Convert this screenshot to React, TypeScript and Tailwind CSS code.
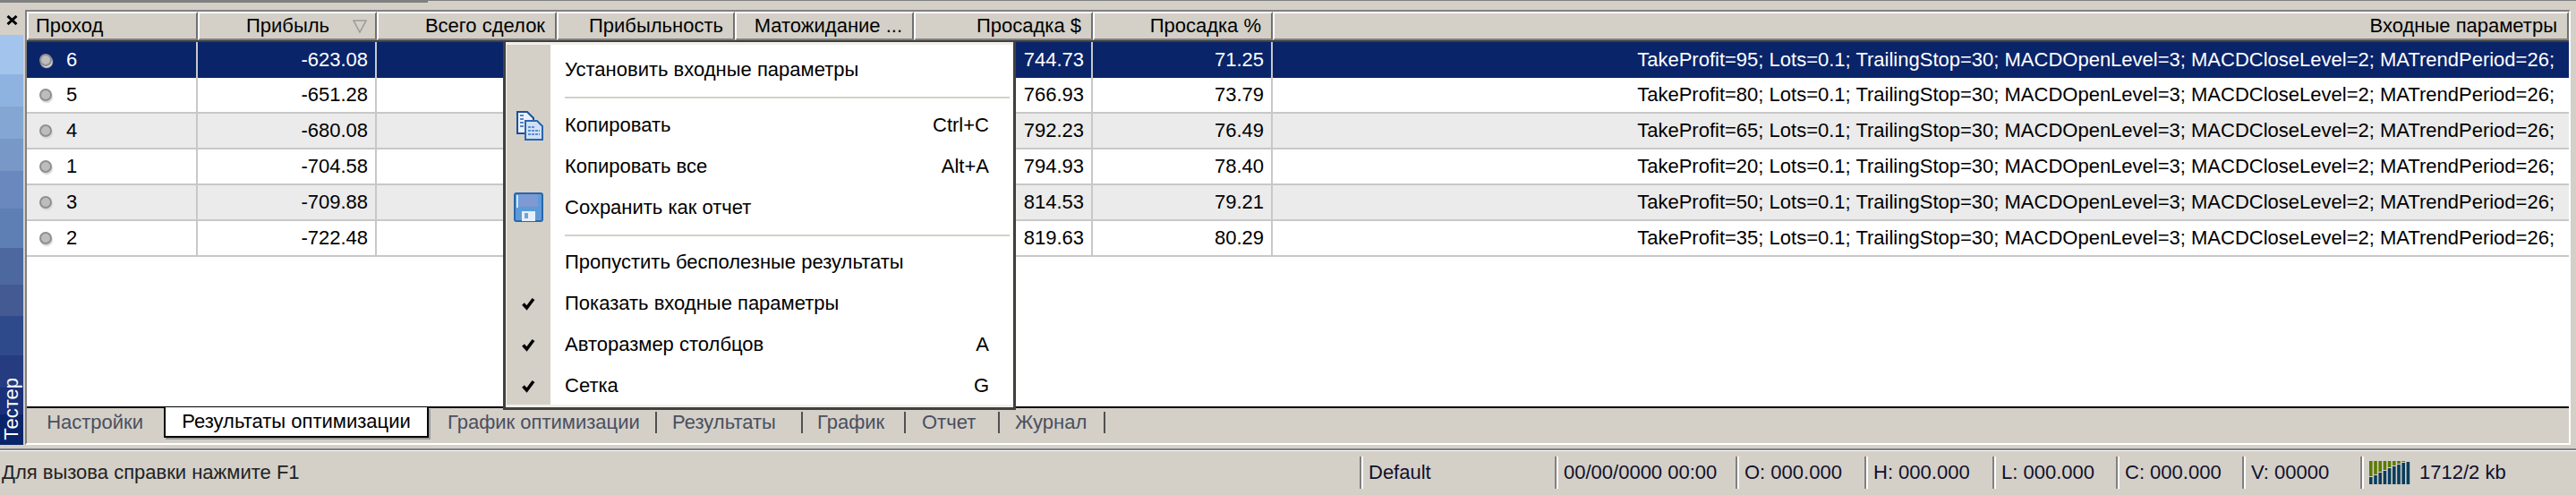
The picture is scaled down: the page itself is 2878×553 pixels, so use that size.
import { FC } from "react";

const RESULTS = [
  { pass: "6", profit: "-623.08", dd: "744.73", ddp: "71.25", tp: 95 },
  { pass: "5", profit: "-651.28", dd: "766.93", ddp: "73.79", tp: 80 },
  { pass: "4", profit: "-680.08", dd: "792.23", ddp: "76.49", tp: 65 },
  { pass: "1", profit: "-704.58", dd: "794.93", ddp: "78.40", tp: 20 },
  { pass: "3", profit: "-709.88", dd: "814.53", ddp: "79.21", tp: 50 },
  { pass: "2", profit: "-722.48", dd: "819.63", ddp: "80.29", tp: 35 },
];

const GRID =
  "grid grid-cols-[191px_200px_201px_199px_200px_200px_201px_1fr]";

const SIDE_STEPS = [
  "h-[44px] bg-[#a3c4ec]",
  "h-[36px] bg-[#8fb3e0]",
  "h-[36px] bg-[#84a6d2]",
  "h-[36px] bg-[#7899c7]",
  "h-[42px] bg-[#6a88bd]",
  "h-[44px] bg-[#5e7fb4]",
  "h-[41px] bg-[#4d689f]",
  "h-[35px] bg-[#435b92]",
  "h-[44px] bg-[#2f4a8a]",
  "h-[36px] bg-[#253c80]",
  "h-[30px] bg-[#1a3078]",
  "flex-1 bg-[#0a246a]",
];

const HeaderCell: FC<{ label?: string; left?: boolean; sort?: boolean }> = ({
  label,
  left,
  sort,
}) => (
  <div
    className={`flex h-full items-center border-t-2 border-r-2 border-b-2 border-l-2 border-t-white border-r-[#707070] border-b-[#808080] border-l-white ${
      left ? "justify-start pl-2" : sort ? "justify-end pr-[9px]" : "justify-end pr-[11px]"
    }`}
  >
    <span className="whitespace-nowrap">{label}</span>
    {sort && (
      <svg width="16" height="15" viewBox="0 0 16 15" className="ml-[26px]">
        <path d="M1 1h14L8 14z" fill="none" stroke="#9a9a9a" strokeWidth="1.5" />
      </svg>
    )}
  </div>
);

const MenuItem: FC<{ label: string; hint?: string; checked?: boolean }> = ({
  label,
  hint,
  checked,
}) => (
  <div className="flex h-[46px] items-center">
    <div className="flex h-full w-[49px] items-center justify-center">
      {checked && (
        <svg width="15" height="15" viewBox="0 0 15 15">
          <path d="M1.5 7.5l4 4.5L13 2" fill="none" stroke="#000" strokeWidth="3.6" />
        </svg>
      )}
    </div>
    <span className="ml-4 whitespace-nowrap">{label}</span>
    {hint && <span className="mr-[26px] ml-auto">{hint}</span>}
  </div>
);

const MenuSeparator: FC<{ className: string }> = ({ className }) => (
  <div className={`${className} flex items-center pr-[3px] pl-[65px]`}>
    <div className="h-[2px] w-full bg-[#d4d0c8]" />
  </div>
);

const CopyIcon = () => (
  <svg width="34" height="34" viewBox="0 0 34 34">
    <path d="M3 2h11l7 7v17H3z" fill="#e9f0fb" stroke="#1f4f96" strokeWidth="2" />
    <path d="M6 6h4M6 10h4M6 14h4M6 18h4" stroke="#5b83c4" strokeWidth="2" />
    <path d="M12 12h13l6 6v15H12z" fill="#cfe0f6" stroke="#2a66ac" strokeWidth="2" />
    <path d="M15 19h8M15 23h13M15 27h13" stroke="#5b8fcf" strokeWidth="2" strokeDasharray="3 1" />
  </svg>
);

const SaveIcon = () => (
  <svg width="34" height="34" viewBox="0 0 34 34">
    <rect x="1" y="1" width="31" height="31" rx="2" fill="#5d9bd8" stroke="#2a66ac" strokeWidth="2" />
    <rect x="6" y="2" width="21" height="14" fill="#7e9ad2" />
    <path d="M4 3v14" stroke="#d5e6f8" strokeWidth="2" />
    <rect x="9" y="21" width="15" height="11" fill="#e6f0fb" />
    <rect x="12" y="23" width="4" height="6" fill="#6fa3dc" />
  </svg>
);

const MemoryBars = () => {
  const bars = [8, 10, 13, 15, 18, 20, 22, 24, 25];
  return (
    <svg width="47" height="26" viewBox="0 0 47 26">
      {bars.map((teal, i) => (
        <g key={i}>
          <rect x={i * 5.2} y={0} width="3.6" height={26 - teal - 1} fill="#5c7a00" />
          <rect x={i * 5.2} y={26 - teal} width="3.6" height={teal} fill="#0a3d5c" />
        </g>
      ))}
    </svg>
  );
};

const StatusCell: FC<{ className: string; label?: string; children?: React.ReactNode }> = ({
  className,
  label,
  children,
}) => (
  <div
    className={`${className} flex h-[36px] items-center border-l-2 border-l-[#808080] pl-[8px] shadow-[inset_2px_0_0_#fff]`}
  >
    {children}
    {label && <span className="whitespace-nowrap">{label}</span>}
  </div>
);

const TAB_SEPARATOR = "h-6 w-[2px] bg-[#505050]";

export default function App() {
  return (
    <div className="relative flex h-[553px] w-[2878px] flex-col overflow-hidden bg-[#d4d0c8] font-['Liberation_Sans',sans-serif] text-[22px] leading-none text-black">
      {/* top edge of the panel above */}
      <div className="flex h-[4px] shrink-0">
        <div className="h-[3px] w-[478px] bg-[#808080]" />
        <div className="h-[1px] flex-1 bg-[#808080]" />
      </div>

      <div className="flex h-[493px] shrink-0">
        {/* side caption */}
        <div className="flex w-[26px] shrink-0 flex-col">
          <div className="flex h-[35px] shrink-0 items-start justify-center pt-[13px]">
            <svg width="13" height="11" viewBox="0 0 13 11">
              <path d="M1.5 1l10 9M11.5 1l-10 9" stroke="#000" strokeWidth="3" />
            </svg>
          </div>
          <div className="relative flex flex-1 flex-col">
            {SIDE_STEPS.map((step) => (
              <div key={step} className={step} />
            ))}
            <span className="absolute bottom-[5px] left-[2px] rotate-180 text-[22px] text-white [writing-mode:vertical-rl]">
              Тестер
            </span>
          </div>
        </div>

        {/* results list */}
        <div className="mt-[7px] ml-[2px] flex w-[2844px] shrink-0 flex-col border-t-2 border-r-2 border-b-2 border-l-2 border-t-[#808080] border-r-white border-b-white border-l-[#808080]">
          <div className="flex h-[443px] flex-col border-b-2 border-b-black bg-white">
            <div className={`${GRID} h-[34px] shrink-0 border-b-2 border-b-[#404040] bg-[#d4d0c8]`}>
              <HeaderCell label="Проход" left />
              <HeaderCell label="Прибыль" sort />
              <HeaderCell label="Всего сделок" />
              <HeaderCell label="Прибыльность" />
              <HeaderCell label="Матожидание ..." />
              <HeaderCell label="Просадка $" />
              <HeaderCell label="Просадка %" />
              <HeaderCell label="Входные параметры" />
            </div>
            {RESULTS.map((r, i) => {
              const selected = i === 0;
              const striped = i % 2 === 0;
              const row = selected
                ? "bg-[#0a246a] text-white"
                : striped
                  ? "bg-[#ebebeb] border-b-2 border-b-[#c8c8c8]"
                  : "bg-white border-b-2 border-b-[#c8c8c8]";
              const cell = "flex items-center justify-end border-r-2 border-r-[#c8c8c8] pr-2";
              return (
                <div key={r.pass} className={`${GRID} h-10 shrink-0 ${row}`}>
                  <div className="flex items-center border-r-2 border-r-[#c8c8c8] pl-[14px]">
                    <span className="size-[14px] rounded-full border-2 border-[#8f8f8f] bg-[#bdbdbd] shadow-[1px_2px_1px_#d8d8d8]" />
                    <span className="ml-[16px]">{r.pass}</span>
                  </div>
                  <div className={cell}>{r.profit}</div>
                  <div className={cell} />
                  <div className={cell} />
                  <div className={cell} />
                  <div className={cell}>{r.dd}</div>
                  <div className={cell}>{r.ddp}</div>
                  <div className="flex items-center justify-end whitespace-nowrap pr-4">
                    TakeProfit={r.tp}; Lots=0.1; TrailingStop=30; MACDOpenLevel=3; MACDCloseLevel=2; MATrendPeriod=26;
                  </div>
                </div>
              );
            })}
          </div>

          {/* tabs */}
          <div className="flex h-[39px] shrink-0 items-start text-[#4a4f60]">
            <div className="flex h-[32px] w-[153px] items-center justify-end pr-[23px]">Настройки</div>
            <div className="-mt-[1px] flex h-[34px] w-[296px] items-center justify-center border-r-2 border-b-2 border-l-2 border-black bg-white text-black shadow-[2px_2px_0_#9a9a9a]">
              Результаты оптимизации
            </div>
            <div className="flex h-[32px] items-center">
              <span className="ml-[21px] w-[232px] whitespace-nowrap">График оптимизации</span>
              <span className={TAB_SEPARATOR} />
              <span className="ml-[17px] w-[144px]">Результаты</span>
              <span className={TAB_SEPARATOR} />
              <span className="ml-[16px] w-[97px]">График</span>
              <span className={TAB_SEPARATOR} />
              <span className="ml-[18px] w-[85px]">Отчет</span>
              <span className={TAB_SEPARATOR} />
              <span className="ml-[17px] w-[99px]">Журнал</span>
              <span className={TAB_SEPARATOR} />
            </div>
          </div>
        </div>
      </div>

      {/* status bar */}
      <div className="mt-[4px] flex h-[52px] shrink-0 flex-col">
        <div className="h-[2px] bg-[#808080]" />
        <div className="h-[1px] bg-white" />
        <div className="flex h-[47px] items-center text-[#10102c]">
          <div className="w-[1519px] pl-[2px] text-[#222]">Для вызова справки нажмите F1</div>
          <StatusCell className="w-[218px]" label="Default" />
          <StatusCell className="w-[202px]" label="00/00/0000 00:00" />
          <StatusCell className="w-[144px]" label="O: 000.000" />
          <StatusCell className="w-[143px]" label="H: 000.000" />
          <StatusCell className="w-[138px]" label="L: 000.000" />
          <StatusCell className="w-[141px]" label="C: 000.000" />
          <StatusCell className="w-[132px]" label="V: 00000" />
          <StatusCell className="w-[241px]" label="1712/2 kb">
            <span className="mr-[9px] flex">
              <MemoryBars />
            </span>
          </StatusCell>
        </div>
      </div>
      <div className="h-[2px] bg-[#f4f4f4]" />

      {/* context menu */}
      <div className="absolute top-[47px] left-[562px] h-[411px] w-[573px] border-r-[3px] border-b-[3px] border-l-[3px] border-r-[#404040] border-b-[#404040] border-l-[#404040] bg-[#f1efe8] pt-[3px] pr-[1px] pb-[3px] pl-[1px]">
        <div className="relative h-full bg-white bg-[linear-gradient(90deg,#d4d0c8_49px,#ffffff_49px)] pt-[5px]">
          <MenuItem label="Установить входные параметры" />
          <MenuSeparator className="h-[16px]" />
          <MenuItem label="Копировать" hint="Ctrl+C" />
          <MenuItem label="Копировать все" hint="Alt+A" />
          <MenuItem label="Сохранить как отчет" />
          <MenuSeparator className="h-[15px]" />
          <MenuItem label="Пропустить бесполезные результаты" />
          <MenuItem label="Показать входные параметры" checked />
          <MenuItem label="Авторазмер столбцов" hint="A" checked />
          <MenuItem label="Сетка" hint="G" checked />
          <span className="absolute top-[73px] left-[9px]">
            <CopyIcon />
          </span>
          <span className="absolute top-[165px] left-[8px]">
            <SaveIcon />
          </span>
        </div>
      </div>
    </div>
  );
}
